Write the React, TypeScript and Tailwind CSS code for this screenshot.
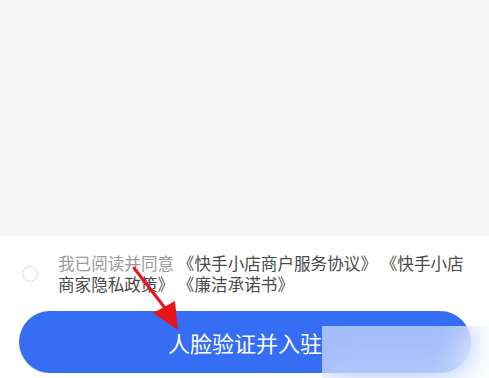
const App = () => {
  return (
    <div className="w-[489px] h-[378px] bg-white overflow-hidden relative font-['Noto_Sans_CJK_SC',sans-serif]">
      <div className="h-[236px] bg-[#f5f5f5]" />
      <div className="flex items-center pl-[22px] pr-[10px] pt-[17px]">
        <div className="w-[16px] h-[16px] rounded-full border border-[#dcdcdc] shrink-0" />
        <p className="ml-[20px] text-[16.6px] leading-[21px] text-[#4a4a4a]">
          <span className="text-[#9a9a9a]">我已阅读并同意</span> 《快手小店商户服务协议》 《快手小店商家隐私政策》 《廉洁承诺书》
        </p>
      </div>
      <div className="px-[19px] pt-[16px] pr-[18px]">
        <button className="w-full h-[62px] rounded-full bg-[#356df5] text-white text-[22px] flex items-center justify-center">
          人脸验证并入驻
        </button>
      </div>

      {/* watermark blur */}
      <div className="absolute left-[322px] top-[326px] w-[167px] h-[52px] bg-white/55 backdrop-blur-lg" />

      {/* red arrow annotation */}
      <svg className="absolute left-0 top-0" width="489" height="378" viewBox="0 0 489 378">
        <line x1="134" y1="268" x2="165" y2="308" stroke="#e8141a" strokeWidth="3" strokeLinecap="round" />
        <polygon points="178,330 153,313 175,301" fill="#e8141a" />
      </svg>
    </div>
  );
};

export default App;
